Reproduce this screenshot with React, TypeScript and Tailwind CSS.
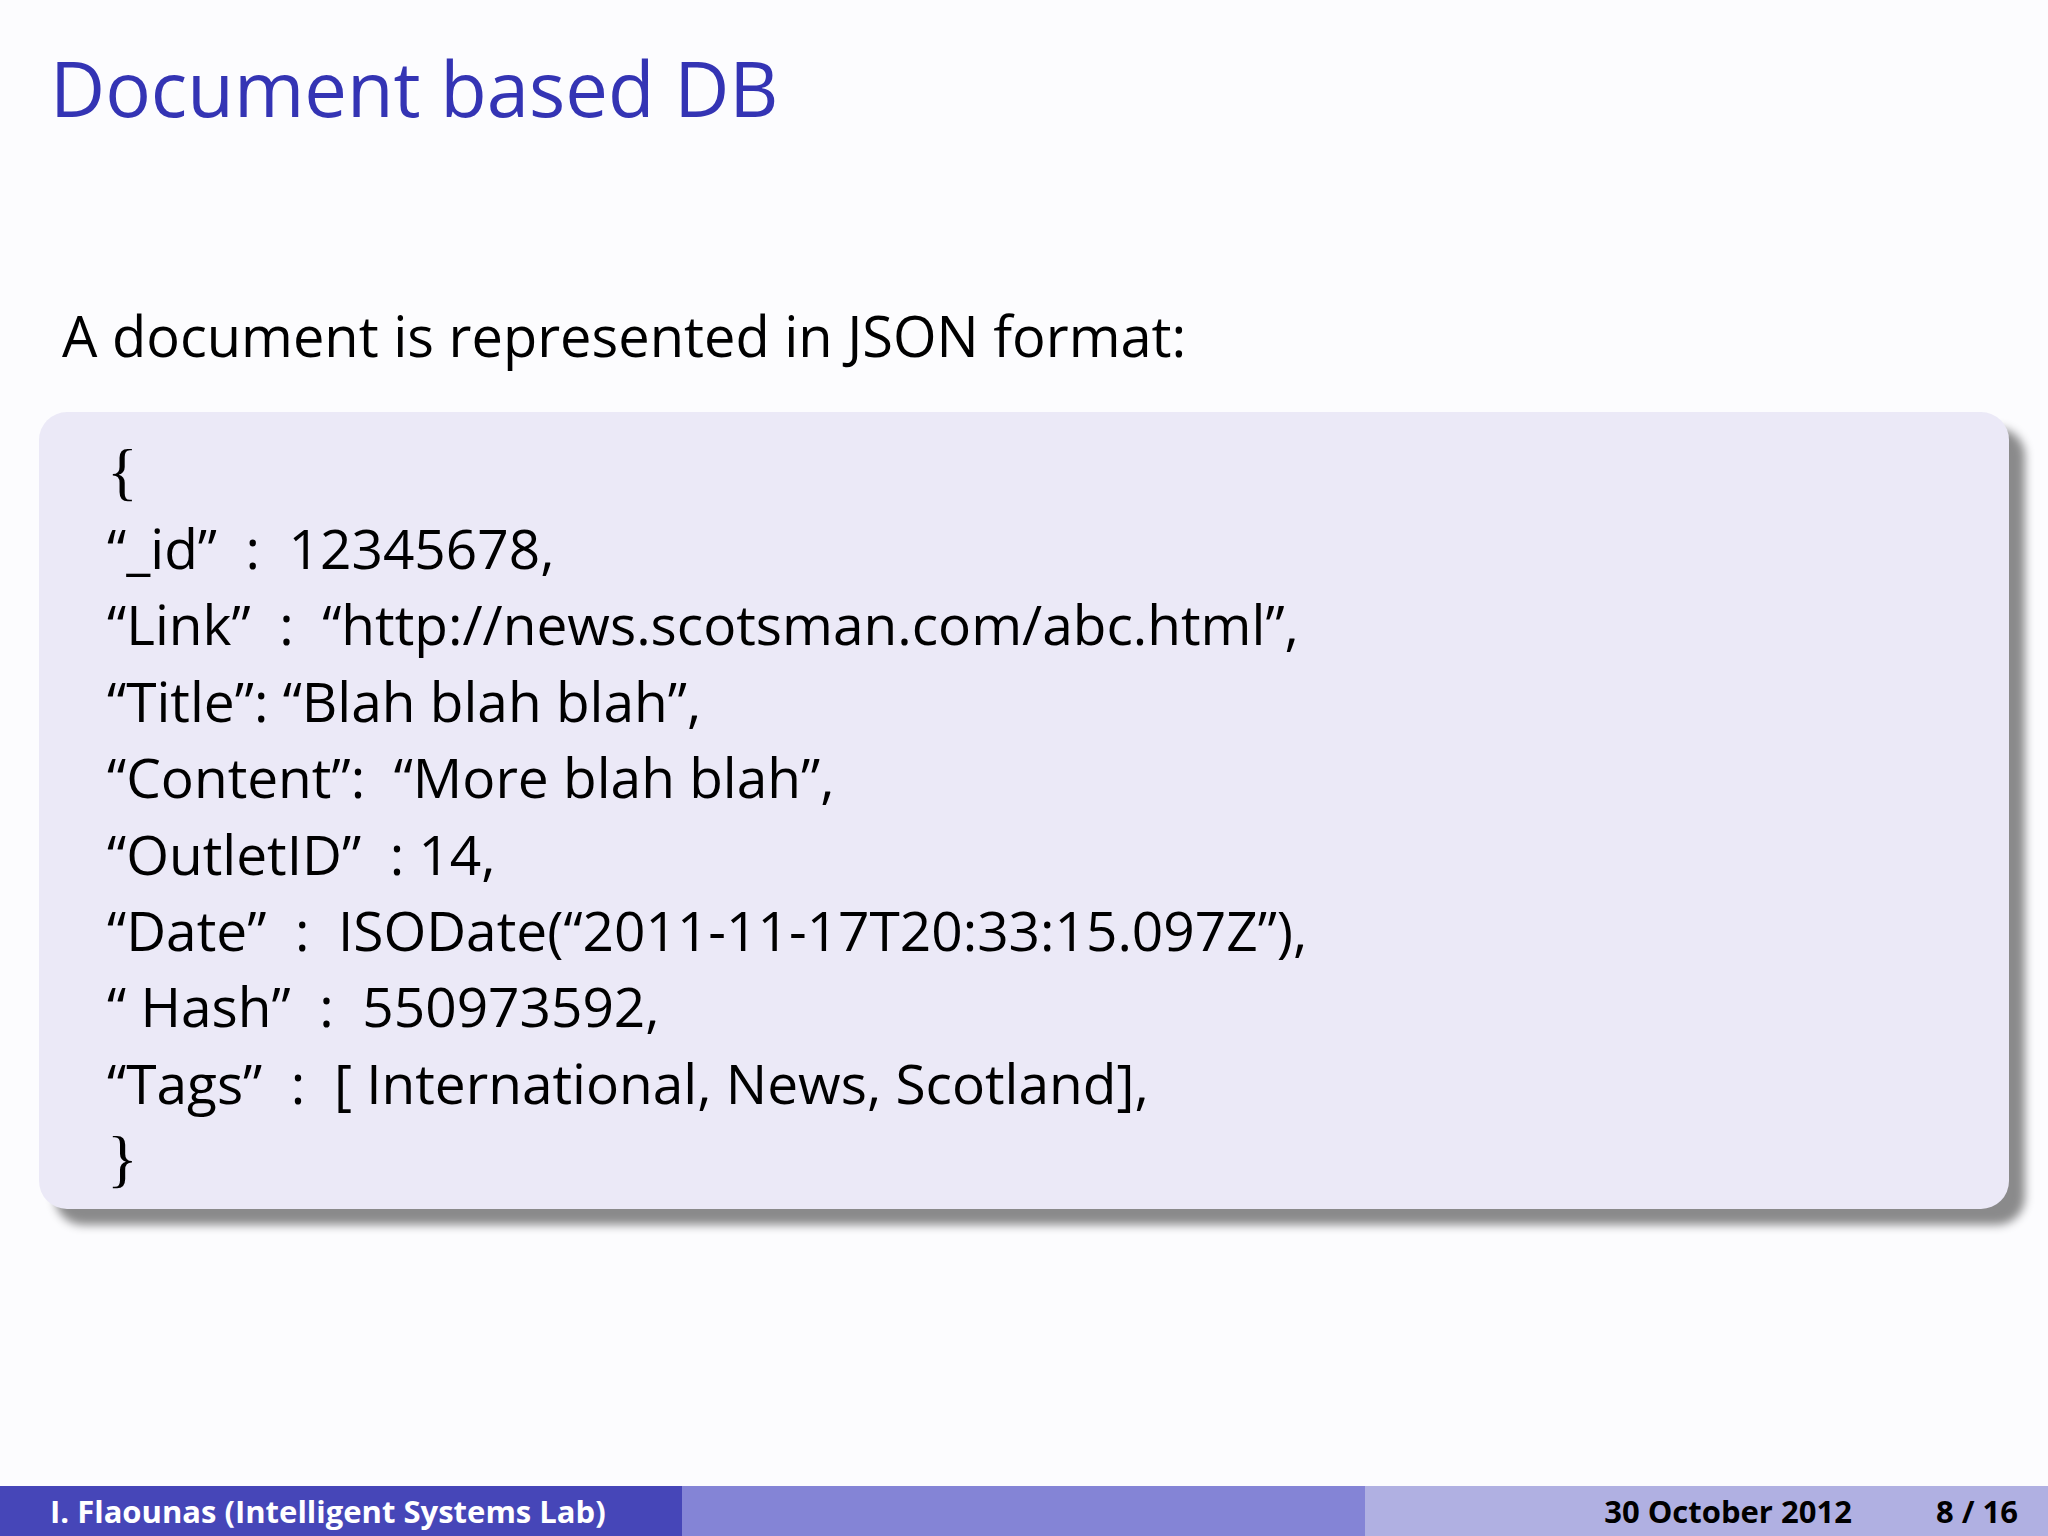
export default function App() {
  const lines = [
    "“_id”  :  12345678,",
    "“Link”  :  “http://news.scotsman.com/abc.html”,",
    "“Title”: “Blah blah blah”,",
    "“Content”:  “More blah blah”,",
    "“OutletID”  : 14,",
    "“Date”  :  ISODate(“2011-11-17T20:33:15.097Z”),",
    "“ Hash”  :  550973592,",
    "“Tags”  :  [ International, News, Scotland],",
  ];
  return (
    <div className="w-[2048px] h-[1536px] bg-[#fcfcfe] flex flex-col" style={{ fontFamily: '"Open Sans", "Liberation Sans", sans-serif' }}>
      <div className="h-[140px] pl-[50px] pt-[38px] text-[76px] leading-[100px] text-[#3434b4]">Document based DB</div>
      <div className="flex-1 flex flex-col">
        <div className="mt-[160px] pl-[62px] text-[56px] leading-[70px] text-black">A document is represented in JSON format:</div>
        <div className="mt-[42px] ml-[39px] w-[1970px] h-[797px] rounded-[28px] bg-[#ebe9f7] shadow-[16px_16px_10px_rgba(0,0,0,0.45)] pl-[68px] pt-[22px] text-black">
          <div className="text-[64px] leading-[76px]" style={{ fontFamily: '"Liberation Serif", serif' }}>{"{"}</div>
          {lines.map((l) => (
            <div key={l} className="text-[55px] leading-[76.4px] whitespace-pre">{l}</div>
          ))}
          <div className="text-[64px] leading-[76px]" style={{ fontFamily: '"Liberation Serif", serif' }}>{"}"}</div>
        </div>
      </div>
      <div className="h-[50px] flex text-[31px] font-bold">
        <div className="w-[682px] bg-[#4646b8] text-white pl-[50px] flex items-center">I. Flaounas  (Intelligent Systems Lab)</div>
        <div className="w-[683px] bg-[#8484d6]"></div>
        <div className="flex-1 bg-[#b0b0e2] text-black flex items-center justify-end pr-[30px] gap-[84px]">
          <span>30 October 2012</span><span>8 / 16</span>
        </div>
      </div>
    </div>
  );
}
